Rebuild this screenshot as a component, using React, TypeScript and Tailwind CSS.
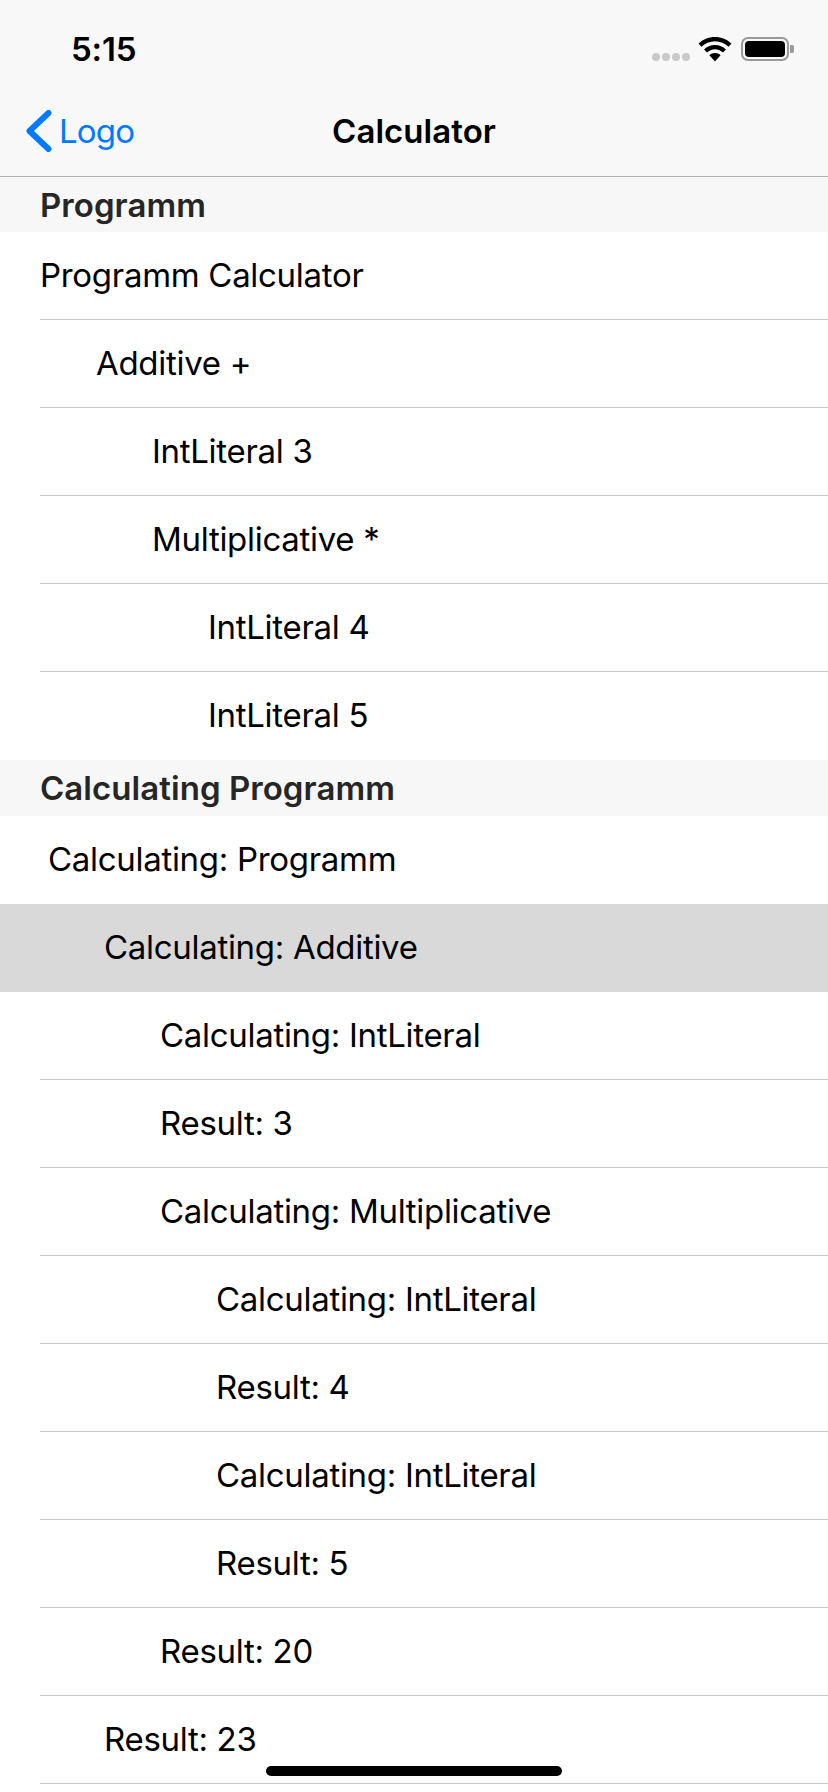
const sections = [
  {
    title: "Programm",
    height: "h-[55px]",
    rows: [
      { text: "Programm Calculator", pad: "pl-[40px]" },
      { text: "Additive +", pad: "pl-[96px]" },
      { text: "IntLiteral 3", pad: "pl-[152px]" },
      { text: "Multiplicative *", pad: "pl-[152px]" },
      { text: "IntLiteral 4", pad: "pl-[208px]" },
      { text: "IntLiteral 5", pad: "pl-[208px]", last: true },
    ],
  },
  {
    title: "Calculating Programm",
    height: "h-[56px]",
    rows: [
      { text: "Calculating: Programm", pad: "pl-[48px]", noLine: true },
      { text: "Calculating: Additive", pad: "pl-[104px]", selected: true },
      { text: "Calculating: IntLiteral", pad: "pl-[160px]" },
      { text: "Result: 3", pad: "pl-[160px]" },
      { text: "Calculating: Multiplicative", pad: "pl-[160px]" },
      { text: "Calculating: IntLiteral", pad: "pl-[216px]" },
      { text: "Result: 4", pad: "pl-[216px]" },
      { text: "Calculating: IntLiteral", pad: "pl-[216px]" },
      { text: "Result: 5", pad: "pl-[216px]" },
      { text: "Result: 20", pad: "pl-[160px]" },
      { text: "Result: 23", pad: "pl-[104px]" },
    ],
  },
];

type RowData = { text: string; pad: string; last?: boolean; noLine?: boolean; selected?: boolean };

function Row({ row }: { row: RowData }) {
  const line = !row.last && !row.noLine && !row.selected;
  return (
    <div className={`relative h-[88px] flex items-center pb-[3px] text-[33px] leading-[40px] tracking-[-0.3px] text-black ${row.pad} ${row.selected ? "bg-[#d9d9d9]" : "bg-white"}`}>
      {row.text}
      {line && <div className="absolute left-[40px] right-0 bottom-0 h-px bg-[#c8c7cc]" />}
    </div>
  );
}

export default function App() {
  return (
    <div className="relative w-[828px] h-[1792px] overflow-hidden bg-white font-['Inter','Liberation_Sans',sans-serif]">
      <div className="h-[177px] bg-[#f8f8f8] border-b border-[#b2b2b2] flex flex-col">
        <div className="h-[88px] flex items-center justify-between pl-[71px] pr-[34px]">
          <span className="text-[33px] font-semibold text-black tracking-[-0.2px] leading-none mt-[10px]">5:15</span>
          <div className="flex items-center mt-[10px]">
            <div className="flex gap-[2px] mr-[8px] mt-[16px]">
              <div className="w-[8px] h-[8px] rounded-full bg-[#c9c9c9]" />
              <div className="w-[8px] h-[8px] rounded-full bg-[#c9c9c9]" />
              <div className="w-[8px] h-[8px] rounded-full bg-[#c9c9c9]" />
              <div className="w-[8px] h-[8px] rounded-full bg-[#c9c9c9]" />
            </div>
            <svg width="34" height="25" viewBox="0 0 34 25" className="mr-[9px]">
              <path d="M17 0C10.5 0 4.8 2.5 0.5 6.6L3.4 9.7C7 6.3 11.8 4.2 17 4.2S27 6.3 30.6 9.7L33.5 6.6C29.2 2.5 23.5 0 17 0Z" fill="#000" />
              <path d="M17 8C12.7 8 8.9 9.7 6.1 12.4L9 15.5C11.1 13.5 13.9 12.2 17 12.2S22.9 13.5 25 15.5L27.9 12.4C25.1 9.7 21.3 8 17 8Z" fill="#000" />
              <path d="M17 16C14.8 16 12.8 16.9 11.4 18.2L17 24.5L22.6 18.2C21.2 16.9 19.2 16 17 16Z" fill="#000" />
            </svg>
            <div className="flex items-center">
              <div className="w-[48px] h-[24px] rounded-[7px] border-2 border-[#999999] p-[2px]">
                <div className="w-full h-full rounded-[4px] bg-black" />
              </div>
              <div className="w-[4px] h-[8px] rounded-r-[2px] bg-[#999999] ml-[1px]" />
            </div>
          </div>
        </div>
        <div className="relative flex-1 flex items-center justify-center">
          <span className="text-[33px] font-semibold text-black tracking-[0.05px]">Calculator</span>
          <div className="absolute left-[26px] top-[22px] flex items-center">
            <svg width="26" height="42" viewBox="0 0 26 42" fill="none">
              <path d="M22.5 3L3.5 21L22.5 39" stroke="#007aff" strokeWidth="6" strokeLinecap="round" strokeLinejoin="round" />
            </svg>
            <span className="ml-[7px] text-[33px] leading-[40px] tracking-[-0.8px] text-[#007aff]">Logo</span>
          </div>
        </div>
      </div>
      {sections.map((section) => (
        <div key={section.title}>
          <div className={`${section.height} bg-[#f7f7f7] pl-[40px] pt-[2px] flex items-center text-[33px] font-semibold tracking-[0.05px] text-[#262626]`}>
            {section.title}
          </div>
          {section.rows.map((row, i) => (
            <Row key={i} row={row} />
          ))}
        </div>
      ))}
      <div className="absolute left-[266px] top-[1766px] w-[296px] h-[10px] rounded-full bg-black" />
    </div>
  );
}
